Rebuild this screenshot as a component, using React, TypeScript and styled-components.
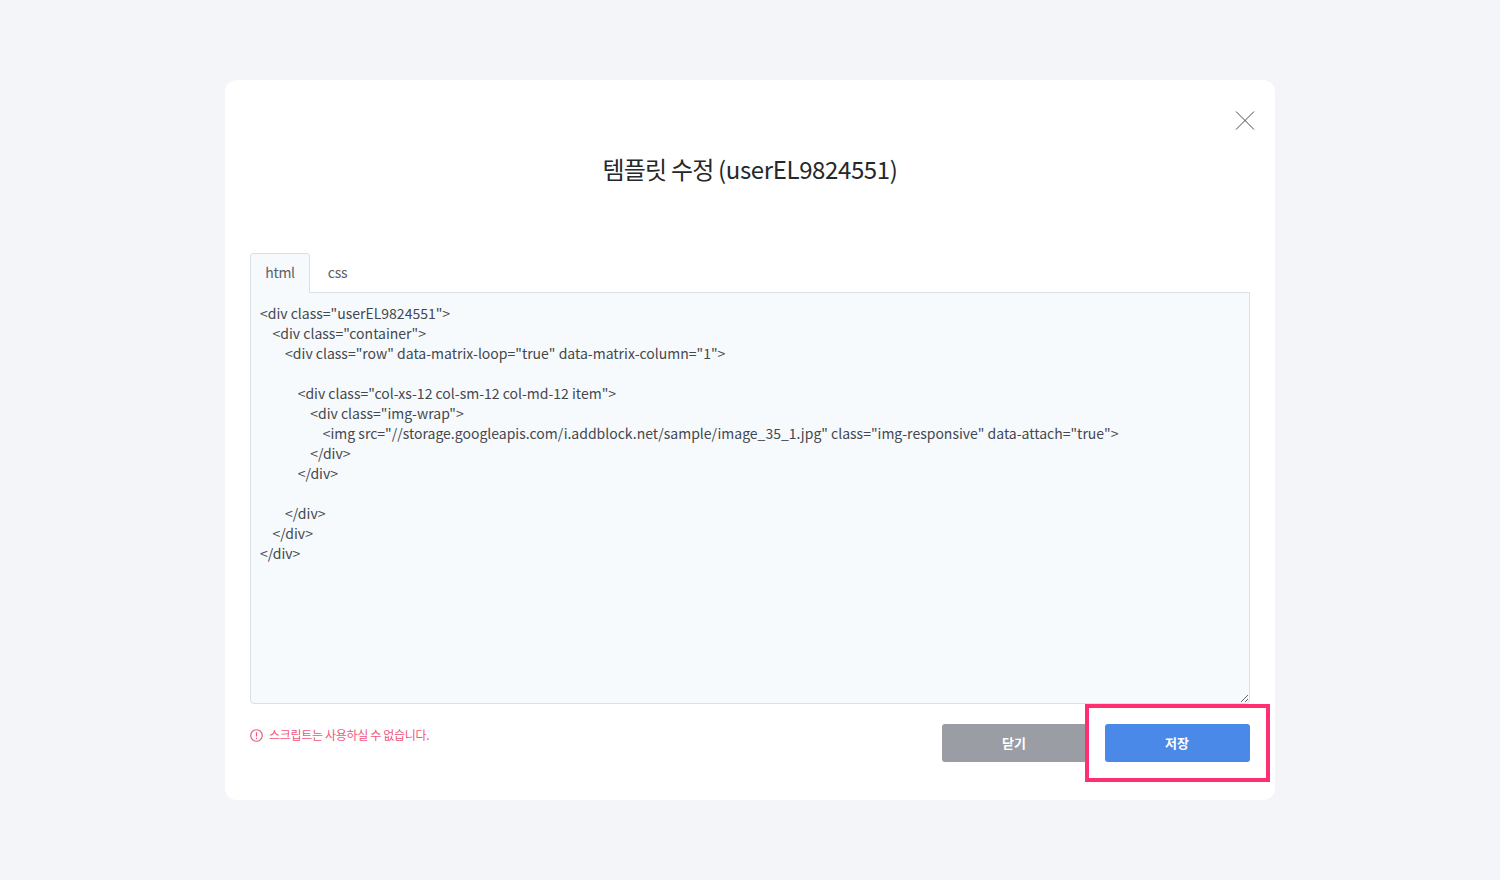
import React from "react";
import styled, { createGlobalStyle } from "styled-components";

const Global = createGlobalStyle`
  html, body { margin: 0; padding: 0; background: #f4f5f9; }
  body { font-family: "Noto Sans CJK KR", "Noto Sans", sans-serif; }
`;

const Page = styled.div`
  width: 1500px;
  height: 880px;
  padding-top: 80px;
  box-sizing: border-box;
  display: flex;
  justify-content: center;
  align-items: flex-start;
`;

const Modal = styled.div`
  position: relative;
  width: 1050px;
  height: 720px;
  box-sizing: border-box;
  padding: 0 25px;
  background: #fff;
  border-radius: 12px;
  display: flex;
  flex-direction: column;
`;

const CloseButton = styled.button`
  position: absolute;
  top: 31px;
  right: 20px;
  width: 20px;
  height: 20px;
  padding: 0;
  border: 0;
  background: none;
  display: block;
  line-height: 0;
`;

const Title = styled.h2`
  margin: 70px 0 0;
  height: 40px;
  line-height: 38px;
  text-align: center;
  font-size: 24px;
  font-weight: 400;
  letter-spacing: -0.8px;
  color: #25282b;
`;

const TitleCode = styled.span`
  letter-spacing: -0.375px;
`;

const Tabs = styled.div`
  margin-top: 63px;
  height: 40px;
  display: flex;
  position: relative;
  z-index: 1;
`;

const Tab = styled.div<{ $active?: boolean }>`
  box-sizing: border-box;
  width: ${(p) => (p.$active ? "60px" : "55px")};
  height: 40px;
  line-height: 36px;
  text-align: center;
  font-size: 14px;
  letter-spacing: -0.3px;
  color: #5c6066;
  border: 1px solid ${(p) => (p.$active ? "#dcdfe3" : "transparent")};
  border-bottom: 0;
  border-radius: 4px 4px 0 0;
  background: ${(p) => (p.$active ? "#f6fafd" : "transparent")};
`;

const Editor = styled.textarea`
  display: block;
  width: 1000px;
  height: 412px;
  margin-top: -1px;
  box-sizing: border-box;
  padding: 10px 9px;
  border: 1px solid #dcdfe3;
  border-radius: 0 0 4px 4px;
  background: #f6fafd;
  color: #44484d;
  font-family: "Noto Sans CJK KR", "Noto Sans", sans-serif;
  font-size: 14px;
  line-height: 20px;
  letter-spacing: 0;
  white-space: pre;
  overflow: hidden;
  outline: none;
  resize: vertical;
`;

const Footer = styled.div`
  margin-top: 20px;
  display: flex;
  justify-content: space-between;
  align-items: flex-start;
`;

const Warning = styled.div`
  display: flex;
  align-items: center;
  gap: 6px;
  height: 22px;
  font-size: 12px;
  line-height: 20px;
  letter-spacing: -0.32px;
  color: #f0567a;
`;

const Actions = styled.div`
  display: flex;
  gap: 18px;
`;

const ActionButton = styled.button<{ $primary?: boolean }>`
  width: 145px;
  height: 38px;
  padding: 0 1px 2px 0;
  border: 0;
  border-radius: 3px;
  background: ${(p) => (p.$primary ? "#4a89e8" : "#9a9da4")};
  color: #fff;
  font-family: inherit;
  font-size: 13px;
  font-weight: 700;
`;

const Highlight = styled.div`
  position: absolute;
  left: 860px;
  top: 624px;
  width: 185px;
  height: 78px;
  box-sizing: border-box;
  border: 4px solid #ff2f72;
  pointer-events: none;
`;

const code = `<div class="userEL9824551">
    <div class="container">
        <div class="row" data-matrix-loop="true" data-matrix-column="1">

            <div class="col-xs-12 col-sm-12 col-md-12 item">
                <div class="img-wrap">
                    <img src="//storage.googleapis.com/i.addblock.net/sample/image_35_1.jpg" class="img-responsive" data-attach="true">
                </div>
            </div>

        </div>
    </div>
</div>`;

export default function App() {
  return (
    <Page>
      <Global />
      <Modal>
        <CloseButton aria-label="닫기">
          <svg width="20" height="20" viewBox="0 0 20 20" fill="none" stroke="#4a4a4a" strokeWidth="1">
            <path d="M1 .5L19 18.5M19 .5L1 18.5" />
          </svg>
        </CloseButton>
        <Title>
          템플릿 수정 <TitleCode>(userEL9824551)</TitleCode>
        </Title>
        <Tabs>
          <Tab $active>html</Tab>
          <Tab>css</Tab>
        </Tabs>
        <Editor defaultValue={code} spellCheck={false} />
        <Footer>
          <Warning>
            <svg width="13" height="13" viewBox="0 0 13 13" fill="none" stroke="#f0567a" strokeWidth="1.2">
              <circle cx="6.5" cy="6.5" r="5.75" />
              <path d="M6.5 3.2V7.4M6.5 8.8V9.9" />
            </svg>
            <span>스크립트는 사용하실 수 없습니다.</span>
          </Warning>
          <Actions>
            <ActionButton>닫기</ActionButton>
            <ActionButton $primary>저장</ActionButton>
          </Actions>
        </Footer>
        <Highlight />
      </Modal>
    </Page>
  );
}
